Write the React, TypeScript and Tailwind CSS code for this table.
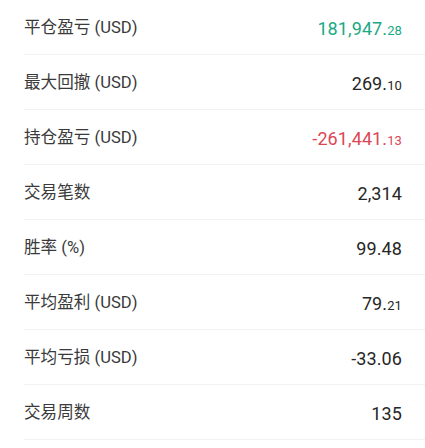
const rows: { label: string; int: string; dec?: string; tone?: 'up' | 'down' }[] = [
  { label: '平仓盈亏 (USD)', int: '181,947.', dec: '28', tone: 'up' },
  { label: '最大回撤 (USD)', int: '269.', dec: '10' },
  { label: '持仓盈亏 (USD)', int: '-261,441.', dec: '13', tone: 'down' },
  { label: '交易笔数', int: '2,314' },
  { label: '胜率 (%)', int: '99.48' },
  { label: '平均盈利 (USD)', int: '79.', dec: '21' },
  { label: '平均亏损 (USD)', int: '-33.06' },
  { label: '交易周数', int: '135' },
];

export default function App() {
  return (
    <div className="w-[425px] h-[448px] bg-white overflow-hidden">
      <div className="pl-6">
        {rows.map((r) => (
          <div
            key={r.label}
            className="flex h-[55px] items-center justify-between border-b border-[#f2f2f2] pr-[23px] pt-[2px]"
          >
            <span
              className="text-[16.6px] text-[#3a3a3a]"
              style={{ fontFamily: 'Roboto, "Noto Sans CJK SC", sans-serif' }}
            >
              {r.label}
            </span>
            <span
              className={
                'font-normal tracking-[0.1px] ' +
                (r.tone === 'up'
                  ? 'text-[#1aa985]'
                  : r.tone === 'down'
                  ? 'text-[#dd4655]'
                  : 'text-[#262626]')
              }
              style={{ fontFamily: 'Roboto, sans-serif' }}
            >
              <span className="text-[18px]">{r.int}</span>
              {r.dec && <span className="text-[13px]">{r.dec}</span>}
            </span>
          </div>
        ))}
      </div>
    </div>
  );
}
